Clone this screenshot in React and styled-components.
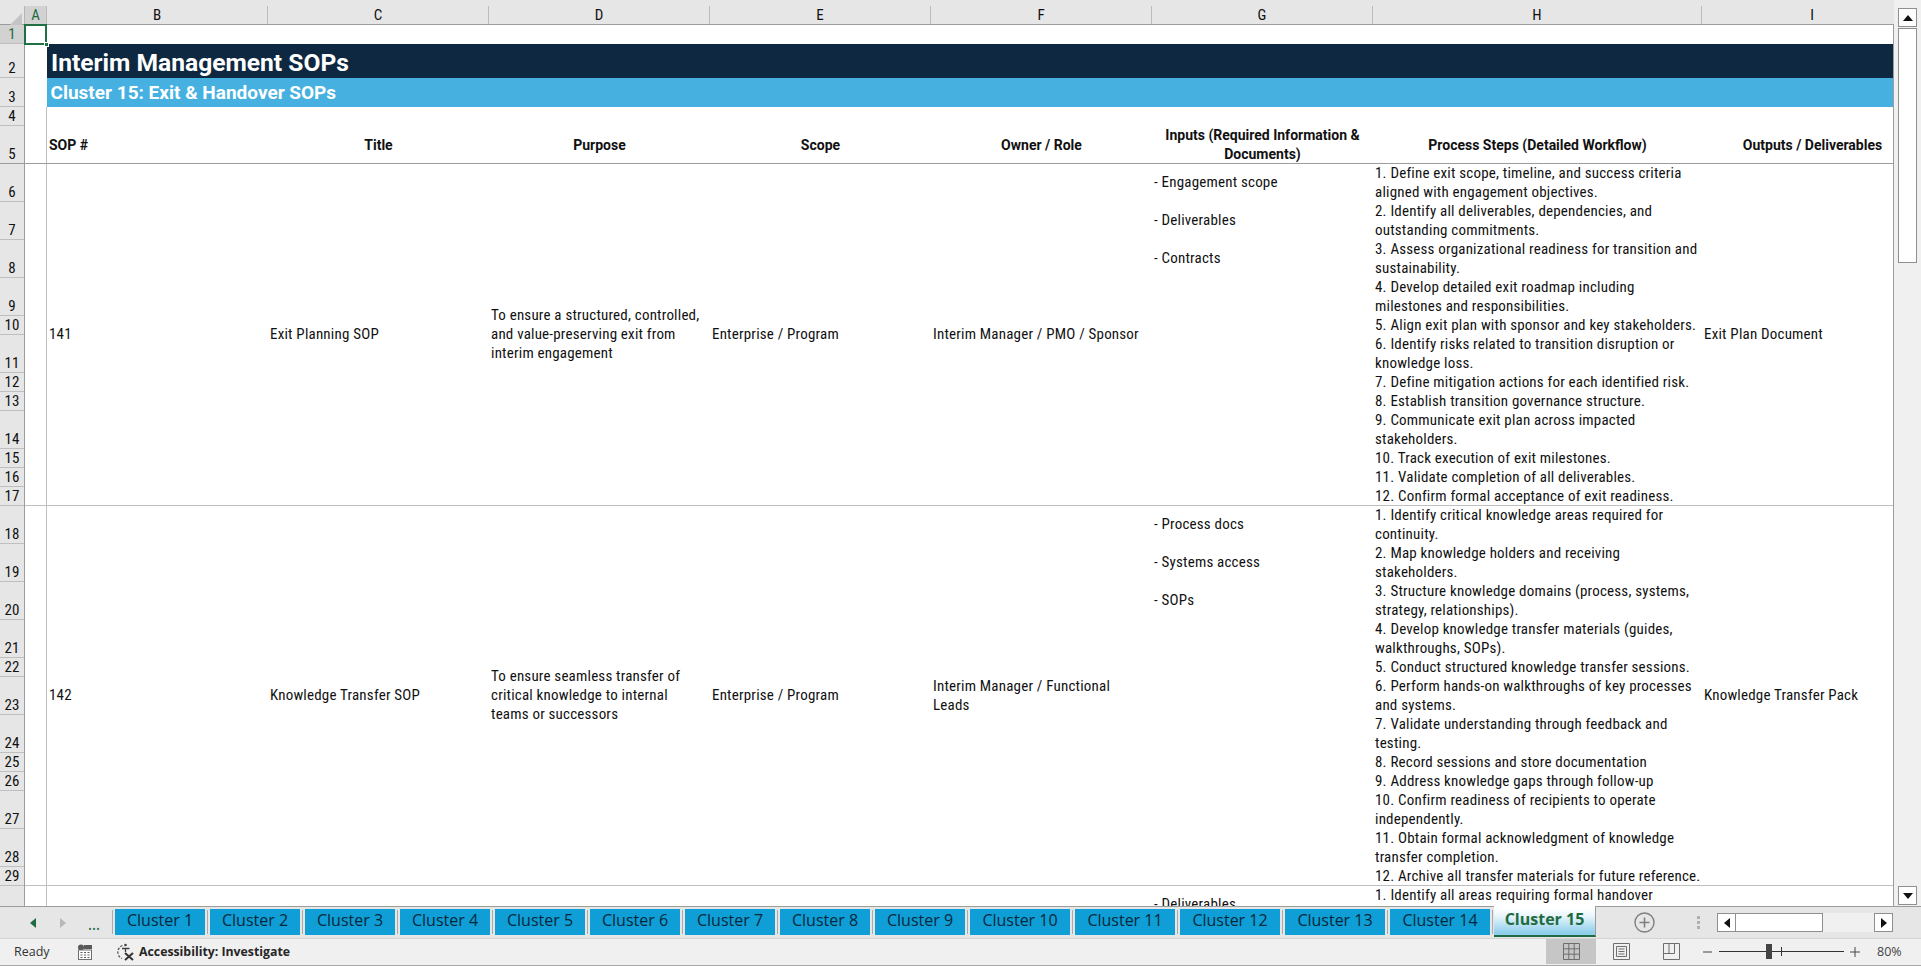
import React from 'react';
import styled, { createGlobalStyle } from 'styled-components';

const CELL_FONT = 'Roboto, "Liberation Sans", sans-serif';
const UI_FONT = '"Open Sans", "Noto Sans", sans-serif';
const COLUMNS = '22px repeat(6, 221px) 329px 221px';
const LINE = 19;

const GlobalStyle = createGlobalStyle`
    html, body {
        margin: 0;
        height: 100%;
        overflow: hidden;
        background: #fff;
    }
    #root {
        height: 100%;
    }
`;

const Window = styled.div`
    height: 100vh;
    display: flex;
    flex-direction: column;
    font-family: ${CELL_FONT};
    font-stretch: 85%;
    color: #111;
`;

const Workspace = styled.div`
    flex: 1;
    min-height: 0;
    display: flex;
`;

const GridArea = styled.div`
    flex: 1;
    min-width: 0;
    display: flex;
    flex-direction: column;
`;

const ColumnHeaderBar = styled.div`
    height: 25px;
    box-sizing: border-box;
    padding-top: 6px;
    background: #e6e6e6;
    border-bottom: 1px solid #9c9c9c;
    display: flex;
`;

const Corner = styled.div`
    width: 25px;
    flex: none;
    box-sizing: border-box;
    padding: 4px 0 0 10px;
    border-right: 1px solid #b4b4b4;
`;

const ColumnLetters = styled.div`
    flex: 1;
    min-width: 0;
    overflow: hidden;
    display: grid;
    grid-template-columns: ${COLUMNS};
`;

const ColumnLetter = styled.div`
    display: flex;
    align-items: center;
    justify-content: center;
    font-size: 15px;
    box-sizing: border-box;
    border-right: 1px solid #bcbcbc;
    background: ${p => (p.$active ? '#d2d2d2' : 'transparent')};
    color: ${p => (p.$active ? '#1f6b41' : '#111')};
`;

const GridBody = styled.div`
    position: relative;
    flex: 1;
    min-height: 0;
    display: flex;
`;

const RowHeaders = styled.div`
    width: 25px;
    flex: none;
    box-sizing: border-box;
    background: #e6e6e6;
    border-right: 1px solid #9c9c9c;
`;

const RowNumber = styled.div`
    height: ${p => p.$height}px;
    box-sizing: border-box;
    display: flex;
    align-items: flex-end;
    justify-content: center;
    line-height: 18px;
    font-size: 15px;
    border-bottom: 1px solid ${p => (p.$strong ? '#9c9c9c' : '#bfbfbf')};
    background: ${p => (p.$active ? '#d2d2d2' : 'transparent')};
    color: ${p => (p.$active ? '#1f6b41' : '#111')};
`;

const Sheet = styled.div`
    flex: 1;
    min-width: 0;
    overflow: hidden;
    background: #fff;
    border-right: 1px solid #9c9c9c;
`;

const SelectedCell = styled.div`
    position: absolute;
    left: 24px;
    top: -1px;
    width: 23px;
    height: 21px;
    box-sizing: border-box;
    border: 2px solid #1f7145;

    &::after {
        content: '';
        position: absolute;
        right: -4px;
        bottom: -4px;
        width: 5px;
        height: 5px;
        background: #1f7145;
        border: 1px solid #fff;
        box-sizing: border-box;
    }
`;

const SpacerRow = styled.div`
    height: ${p => p.$height}px;
    width: ${p => (p.$gutter ? '22px' : 'auto')};
    box-sizing: border-box;
    border-right: ${p => (p.$gutter ? '1px solid #bfbfbf' : '0')};
`;

const BandRow = styled.div`
    height: ${p => p.$height}px;
    box-sizing: border-box;
    margin-left: 22px;
    padding: ${p => p.$drop}px 0 0 ${p => p.$indent}px;
    display: flex;
    align-items: center;
    background: ${p => p.$color};
    color: #fff;
    font-weight: 700;
    font-stretch: 100%;
    font-size: ${p => p.$size}px;
    white-space: nowrap;
`;

const TableRow = styled.div`
    display: grid;
    grid-template-columns: ${COLUMNS};
    height: ${p => p.$height}px;
    box-sizing: border-box;
    overflow: hidden;
    border-bottom: 1px solid ${p => (p.$strong ? '#9c9c9c' : '#bfbfbf')};
`;

const Gutter = styled.div`
    border-right: 1px solid #bfbfbf;
`;

const HeaderCell = styled.div`
    display: flex;
    flex-direction: column;
    justify-content: center;
    align-items: ${p => (p.$left ? 'flex-start' : 'center')};
    padding: 0 2px;
    font-weight: 700;
    font-stretch: 100%;
    font-size: 14px;
    line-height: ${LINE}px;
    white-space: nowrap;
`;

const BodyCell = styled.div`
    display: flex;
    flex-direction: column;
    justify-content: ${p => (p.$top ? 'flex-start' : 'center')};
    padding: 0 2px;
    font-size: 15px;
    letter-spacing: 0.2px;
    line-height: ${LINE}px;
    white-space: nowrap;
`;

const InputItem = styled.div`
    padding-top: 9.5px;
    height: 38px;
    flex: none;
    box-sizing: border-box;
`;

const TabBar = styled.div`
    height: 32px;
    flex: none;
    box-sizing: border-box;
    background: #e6e6e6;
    display: flex;
    align-items: flex-start;
`;

const TabNav = styled.div`
    width: 110px;
    flex: none;
    height: 100%;
    box-sizing: border-box;
    border-top: 1px solid #9c9c9c;
    display: flex;
    align-items: center;
    padding-left: 29px;
    gap: 22px;
`;

const Ellipsis = styled.span`
    font-family: ${UI_FONT};
    font-size: 18px;
    line-height: 14px;
    color: #1f6b41;
    margin-left: -1px;
`;

const TabStrip = styled.div`
    display: flex;
    height: 100%;
    box-sizing: border-box;
    border-top: 1px solid #9c9c9c;
    padding-top: 2px;
    align-items: flex-start;
`;

const TabDivider = styled.div`
    width: 1px;
    height: 24px;
    margin: 1px 2px 0;
    background: #ababab;
`;

const Tab = styled.div`
    width: ${p => p.$width}px;
    height: 26px;
    flex: none;
    box-sizing: border-box;
    padding-bottom: 5px;
    display: flex;
    align-items: center;
    justify-content: center;
    background: #0f9ed5;
    color: #06283c;
    font-family: ${UI_FONT};
    font-stretch: 100%;
    font-size: 16px;
`;

const ActiveTab = styled.div`
    width: 102px;
    height: 31px;
    flex: none;
    margin: -3px 0 0 -1px;
    box-sizing: border-box;
    display: flex;
    align-items: center;
    justify-content: center;
    padding-bottom: 4px;
    background: linear-gradient(#ffffff 8%, #e8f5fb 35%, #8fcfeb 92%);
    border-right: 1px solid #9c9c9c;
    border-bottom: 2px solid #1f6b41;
    color: #1f6b41;
    font-family: ${UI_FONT};
    font-stretch: 100%;
    font-weight: 700;
    font-size: 16px;
`;

const TabTools = styled.div`
    flex: 1;
    height: 100%;
    box-sizing: border-box;
    border-top: 1px solid #9c9c9c;
    display: flex;
    align-items: center;
    padding-left: 38px;
`;

const SplitDots = styled.div`
    margin-left: 42px;
    display: flex;
    flex-direction: column;
    gap: 2px;

    span {
        width: 3px;
        height: 3px;
        background: #b0b0b0;
    }
`;

const HScroll = styled.div`
    margin-left: 17px;
    width: 176px;
    height: 19px;
    display: flex;
    background: #f0f0f0;
`;

const ScrollButton = styled.div`
    width: ${p => p.$size}px;
    height: ${p => p.$size}px;
    box-sizing: border-box;
    flex: none;
    background: #fff;
    border: 1px solid #8f8f8f;
    display: flex;
    align-items: center;
    justify-content: center;
`;

const HThumb = styled.div`
    width: 88px;
    margin-left: -1px;
    box-sizing: border-box;
    background: #fff;
    border: 1px solid #8f8f8f;
`;

const HTrack = styled.div`
    flex: 1;
`;

const VScroll = styled.div`
    width: 27px;
    flex: none;
    box-sizing: border-box;
    padding: 8px 0 1px 4px;
    background: #f0f0f0;
    display: flex;
    flex-direction: column;
`;

const VThumb = styled.div`
    width: 19px;
    height: 235px;
    margin-top: 1px;
    box-sizing: border-box;
    background: #fff;
    border: 1px solid #8f8f8f;
`;

const VTrack = styled.div`
    flex: 1;
`;

const StatusBar = styled.div`
    height: 28px;
    flex: none;
    box-sizing: border-box;
    padding-bottom: 1px;
    background: #f0f0f0;
    border-top: 1px solid #d4d4d4;
    border-bottom: 1px solid #a8a8a8;
    display: flex;
    align-items: center;
    font-family: ${UI_FONT};
    font-stretch: 100%;
    font-size: 12.5px;
    color: #333;
`;

const ReadyLabel = styled.span`
    margin-left: 14px;
    width: 63px;
`;

const AccessLabel = styled.span`
    margin-left: 3px;
    font-weight: 700;
    font-size: 12.3px;
    color: #262626;
`;

const StatusIcon = styled.span`
    display: flex;
    margin-left: ${p => p.$gap || 0}px;
`;

const StatusRight = styled.div`
    margin-left: auto;
    height: 100%;
    display: flex;
    align-items: center;
`;

const ViewButton = styled.div`
    width: 50px;
    height: 100%;
    display: flex;
    align-items: center;
    justify-content: center;
    background: ${p => (p.$active ? '#c6c6c6' : 'transparent')};
`;

const ZoomSlider = styled.div`
    display: flex;
    align-items: center;
    margin-left: 7px;
`;

const ZoomTrack = styled.div`
    position: relative;
    width: 125px;
    height: 1px;
    margin: 0 6px;
    background: #333;
`;

const ZoomThumb = styled.div`
    position: absolute;
    left: 47px;
    top: -7px;
    width: 6px;
    height: 15px;
    background: #444;
`;

const ZoomTick = styled.div`
    position: absolute;
    left: 62px;
    top: -4px;
    width: 1px;
    height: 9px;
    background: #333;
`;

const ZoomValue = styled.span`
    width: 44px;
    margin-left: 17px;
    color: #444;
    font-size: 12.5px;
`;

const Triangle = ({ dir, color = '#111' }) => {
    const points = {
        left: '7,0 7,10 1,5',
        right: '1,0 1,10 7,5',
        up: '0,7 10,7 5,1',
        down: '0,1 10,1 5,7',
    };
    const wide = dir === 'up' || dir === 'down';
    return (
        <svg width={wide ? 10 : 8} height={wide ? 8 : 10} viewBox={wide ? '0 0 10 8' : '0 0 8 10'}>
            <polygon points={points[dir]} fill={color} />
        </svg>
    );
};

const CornerMark = () => (
    <svg width="12" height="12" viewBox="0 0 12 12">
        <polygon points="12,0 12,12 0,12" fill="#c4c4c4" />
    </svg>
);

const AddSheetIcon = () => (
    <svg width="21" height="21" viewBox="0 0 21 21" fill="none" stroke="#7f7f7f">
        <circle cx="10.5" cy="10.5" r="9.5" strokeWidth="1.4" />
        <path d="M10.5 5.5v10M5.5 10.5h10" strokeWidth="1.6" />
    </svg>
);

const MacroIcon = () => (
    <svg width="16" height="16" viewBox="0 0 16 16">
        <circle cx="4" cy="3.5" r="3" fill="#595959" />
        <rect x="7" y="1" width="8" height="4" fill="#595959" />
        <rect x="1.5" y="6" width="13" height="9.5" fill="#fff" stroke="#6e6e6e" />
        <path d="M3.5 8.5h2M7 8.5h2M10.5 8.5h2M3.5 11h2M7 11h2M10.5 11h2M3.5 13.5h2M7 13.5h2M10.5 13.5h2" stroke="#595959" />
    </svg>
);

const AccessIcon = () => (
    <svg width="20" height="18" viewBox="0 0 20 18" fill="none">
        <path d="M6.5 2.5A7 7 0 0 0 6 15.5" stroke="#595959" strokeWidth="1.3" strokeDasharray="2.5 1.4" />
        <circle cx="9.5" cy="2" r="1.3" fill="#404040" />
        <path d="M6 5.5h7.5M9.5 5v4" stroke="#404040" strokeWidth="1.3" />
        <path d="M9 10l8 7M17 10l-8 7" stroke="#333" strokeWidth="2" />
    </svg>
);

const GridIcon = () => (
    <svg width="17" height="17" viewBox="0 0 17 17" fill="none" stroke="#6e6e6e">
        <path d="M.5.5h16v16H.5zM.5 5.8h16M.5 11.2h16M5.8.5v16M11.2.5v16" />
    </svg>
);

const PageIcon = () => (
    <svg width="17" height="17" viewBox="0 0 17 17" fill="none" stroke="#6e6e6e">
        <path d="M.5.5h16v16H.5zM3.5 3.5h10v10h-10zM5.5 6h6M5.5 8.5h6M5.5 11h6" />
    </svg>
);

const BreakIcon = () => (
    <svg width="17" height="17" viewBox="0 0 17 17" fill="none" stroke="#6e6e6e">
        <path d="M.5.5h16v16H.5zM.5 10.5h11V.5M6 .5v10" />
    </svg>
);

const ZoomSign = ({ plus }) => (
    <svg width="10" height="10" viewBox="0 0 10 10" stroke="#444">
        <path d={plus ? 'M0 5h10M5 0v10' : 'M0 5h9'} />
    </svg>
);

const rowNumbers = [
    [1, 19], [2, 34], [3, 29], [4, 19], [5, 37.5],
    [6, 38], [7, 38], [8, 38], [9, 38], [10, 19], [11, 38], [12, 19], [13, 19], [14, 38], [15, 19], [16, 19], [17, 19],
    [18, 38], [19, 38], [20, 38], [21, 38], [22, 19], [23, 38], [24, 38], [25, 19], [26, 19], [27, 38], [28, 38], [29, 19],
];

const sops = [
    {
        id: '141',
        title: 'Exit Planning SOP',
        purpose: ['To ensure a structured, controlled,', 'and value-preserving exit from', 'interim engagement'],
        scope: 'Enterprise / Program',
        owner: ['Interim Manager / PMO / Sponsor'],
        inputs: ['- Engagement scope', '- Deliverables', '- Contracts'],
        steps: [
            '1. Define exit scope, timeline, and success criteria',
            'aligned with engagement objectives.',
            '2. Identify all deliverables, dependencies, and',
            'outstanding commitments.',
            '3. Assess organizational readiness for transition and',
            'sustainability.',
            '4. Develop detailed exit roadmap including',
            'milestones and responsibilities.',
            '5. Align exit plan with sponsor and key stakeholders.',
            '6. Identify risks related to transition disruption or',
            'knowledge loss.',
            '7. Define mitigation actions for each identified risk.',
            '8. Establish transition governance structure.',
            '9. Communicate exit plan across impacted',
            'stakeholders.',
            '10. Track execution of exit milestones.',
            '11. Validate completion of all deliverables.',
            '12. Confirm formal acceptance of exit readiness.',
        ],
        output: 'Exit Plan Document',
    },
    {
        id: '142',
        title: 'Knowledge Transfer SOP',
        purpose: ['To ensure seamless transfer of', 'critical knowledge to internal', 'teams or successors'],
        scope: 'Enterprise / Program',
        owner: ['Interim Manager / Functional', 'Leads'],
        inputs: ['- Process docs', '- Systems access', '- SOPs'],
        steps: [
            '1. Identify critical knowledge areas required for',
            'continuity.',
            '2. Map knowledge holders and receiving',
            'stakeholders.',
            '3. Structure knowledge domains (process, systems,',
            'strategy, relationships).',
            '4. Develop knowledge transfer materials (guides,',
            'walkthroughs, SOPs).',
            '5. Conduct structured knowledge transfer sessions.',
            '6. Perform hands-on walkthroughs of key processes',
            'and systems.',
            '7. Validate understanding through feedback and',
            'testing.',
            '8. Record sessions and store documentation',
            '9. Address knowledge gaps through follow-up',
            '10. Confirm readiness of recipients to operate',
            'independently.',
            '11. Obtain formal acknowledgment of knowledge',
            'transfer completion.',
            '12. Archive all transfer materials for future reference.',
        ],
        output: 'Knowledge Transfer Pack',
    },
];

const headers = [
    { key: 'sop', lines: ['SOP #'], left: true },
    { key: 'title', lines: ['Title'] },
    { key: 'purpose', lines: ['Purpose'] },
    { key: 'scope', lines: ['Scope'] },
    { key: 'owner', lines: ['Owner / Role'] },
    { key: 'inputs', lines: ['Inputs (Required Information &', 'Documents)'] },
    { key: 'steps', lines: ['Process Steps (Detailed Workflow)'] },
    { key: 'outputs', lines: ['Outputs / Deliverables'] },
];

const letters = ['A', 'B', 'C', 'D', 'E', 'F', 'G', 'H', 'I'];

const SopRow = ({ sop }) => (
    <TableRow $height={sop.steps.length * LINE}>
        <Gutter />
        <BodyCell>{sop.id}</BodyCell>
        <BodyCell>{sop.title}</BodyCell>
        <BodyCell>{sop.purpose.map(l => <div key={l}>{l}</div>)}</BodyCell>
        <BodyCell>{sop.scope}</BodyCell>
        <BodyCell>{sop.owner.map(l => <div key={l}>{l}</div>)}</BodyCell>
        <BodyCell $top>{sop.inputs.map(l => <InputItem key={l}>{l}</InputItem>)}</BodyCell>
        <BodyCell $top>{sop.steps.map(l => <div key={l}>{l}</div>)}</BodyCell>
        <BodyCell>{sop.output}</BodyCell>
    </TableRow>
);

const tabs = Array.from({ length: 14 }, (_, i) => i + 1);

export default function App() {
    return (
        <Window>
            <GlobalStyle />
            <Workspace>
                <GridArea>
                    <ColumnHeaderBar>
                        <Corner><CornerMark /></Corner>
                        <ColumnLetters>
                            {letters.map(l => <ColumnLetter key={l} $active={l === 'A'}>{l}</ColumnLetter>)}
                        </ColumnLetters>
                    </ColumnHeaderBar>
                    <GridBody>
                        <RowHeaders>
                            {rowNumbers.map(([n, h]) => (
                                <RowNumber key={n} $height={h} $active={n === 1} $strong={n === 5}>{n}</RowNumber>
                            ))}
                        </RowHeaders>
                        <Sheet>
                            <SpacerRow $height={19} />
                            <BandRow $height={34} $color="#0e2841" $size={24.6} $indent={4} $drop={2}>Interim Management SOPs</BandRow>
                            <BandRow $height={29} $color="#46b1e1" $size={19} $indent={3.5} $drop={0}>Cluster 15: Exit &amp; Handover SOPs</BandRow>
                            <SpacerRow $height={19} $gutter />
                            <TableRow $height={37.5} $strong>
                                <Gutter />
                                {headers.map(h => (
                                    <HeaderCell key={h.key} $left={h.left}>
                                        {h.lines.map(l => <div key={l}>{l}</div>)}
                                    </HeaderCell>
                                ))}
                            </TableRow>
                            {sops.map(s => <SopRow key={s.id} sop={s} />)}
                            <TableRow $height={23}>
                                <Gutter />
                                <BodyCell /><BodyCell /><BodyCell /><BodyCell /><BodyCell />
                                <BodyCell $top><InputItem>- Deliverables</InputItem></BodyCell>
                                <BodyCell $top>1. Identify all areas requiring formal handover</BodyCell>
                                <BodyCell />
                            </TableRow>
                        </Sheet>
                        <SelectedCell />
                    </GridBody>
                </GridArea>
                <VScroll>
                    <ScrollButton $size={19}><Triangle dir="up" /></ScrollButton>
                    <VThumb />
                    <VTrack />
                    <ScrollButton $size={19}><Triangle dir="down" /></ScrollButton>
                </VScroll>
            </Workspace>
            <TabBar>
                <TabNav>
                    <Triangle dir="left" color="#1f6b41" />
                    <Triangle dir="right" color="#b9b9b9" />
                    <Ellipsis>...</Ellipsis>
                </TabNav>
                <TabStrip>
                    <TabDivider />
                    {tabs.map(n => (
                        <React.Fragment key={n}>
                            <Tab $width={n < 10 ? 90 : 100}>{`Cluster ${n}`}</Tab>
                            <TabDivider />
                        </React.Fragment>
                    ))}
                    <ActiveTab>Cluster 15</ActiveTab>
                </TabStrip>
                <TabTools>
                    <AddSheetIcon />
                    <SplitDots><span /><span /><span /></SplitDots>
                    <HScroll>
                        <ScrollButton $size={19}><Triangle dir="left" /></ScrollButton>
                        <HThumb />
                        <HTrack />
                        <ScrollButton $size={19}><Triangle dir="right" /></ScrollButton>
                    </HScroll>
                </TabTools>
            </TabBar>
            <StatusBar>
                <ReadyLabel>Ready</ReadyLabel>
                <MacroIcon />
                <StatusIcon $gap={23}><AccessIcon /></StatusIcon>
                <AccessLabel>Accessibility: Investigate</AccessLabel>
                <StatusRight>
                    <ViewButton $active><GridIcon /></ViewButton>
                    <ViewButton><PageIcon /></ViewButton>
                    <ViewButton><BreakIcon /></ViewButton>
                    <ZoomSlider>
                        <ZoomSign />
                        <ZoomTrack><ZoomThumb /><ZoomTick /></ZoomTrack>
                        <ZoomSign plus />
                    </ZoomSlider>
                    <ZoomValue>80%</ZoomValue>
                </StatusRight>
            </StatusBar>
        </Window>
    );
}
